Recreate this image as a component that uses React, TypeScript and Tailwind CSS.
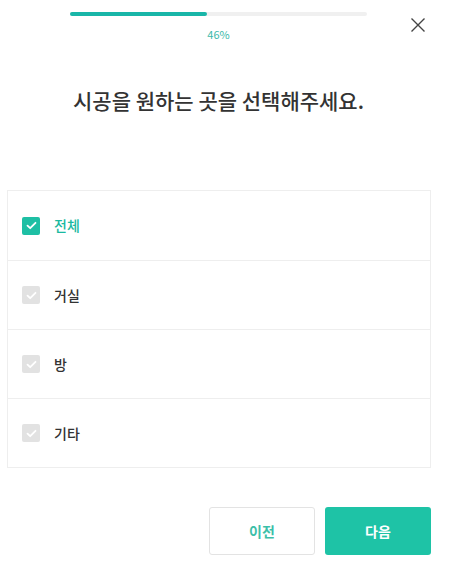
import React from "react";

const items = [
  { label: "전체", checked: true },
  { label: "거실", checked: false },
  { label: "방", checked: false },
  { label: "기타", checked: false },
];

function Check({ on }: { on: boolean }) {
  return (
    <div
      className={`flex h-[18px] w-[18px] items-center justify-center rounded-[2px] ${
        on ? "bg-[#1ebfa4]" : "bg-[#e2e2e2]"
      }`}
    >
      <svg width="11" height="9" viewBox="0 0 11 9" fill="none">
        <path d="M1.5 4.6 4.2 7.2 9.5 1.8" stroke="white" strokeWidth="1.8" strokeLinecap="round" strokeLinejoin="round" />
      </svg>
    </div>
  );
}

export default function App() {
  return (
    <div
      className="relative h-[573px] w-[450px] bg-white"
      style={{ fontFamily: '"Noto Sans CJK KR", "Noto Sans", sans-serif' }}
    >
      <div className="flex w-[437px] flex-col items-center pt-[12px]">
        <div className="h-[4px] w-[297px] rounded-full bg-[#f0f0f0]">
          <div className="h-[4px] w-[137px] rounded-full bg-[#19b6a8]" />
        </div>
        <div className="mt-[11px] text-[11px] leading-[14px] text-[#3bb9a9]">46%</div>
      </div>
      <button className="absolute left-[410px] top-[17px] flex h-[16px] w-[16px] items-center justify-center">
        <svg width="16" height="16" viewBox="0 0 16 16" fill="none">
          <path d="M1.5 1.5 14.5 14.5M14.5 1.5 1.5 14.5" stroke="#444" strokeWidth="1.4" />
        </svg>
      </button>
      <h1 className="mt-[44px] w-[437px] text-center text-[21px] font-medium leading-[30px] text-[#333]">
        시공을 원하는 곳을 선택해주세요.
      </h1>
      <div className="ml-[7px] mt-[75px] w-[424px] border border-[#eeeeee]">
        {items.map((it, i) => (
          <div
            key={it.label}
            className={`flex h-[69px] items-center gap-[14px] pl-[14px] ${
              i > 0 ? "border-t border-[#eeeeee]" : ""
            }`}
          >
            <Check on={it.checked} />
            <span
              className={`text-[14px] font-medium ${it.checked ? "text-[#1ab9a0]" : "text-[#333]"}`}
            >
              {it.label}
            </span>
          </div>
        ))}
      </div>
      <div className="mt-[39px] flex justify-end gap-[10px] pr-[19px]">
        <button className="h-[48px] w-[106px] rounded-[3px] border border-[#e3e3e3] bg-white text-[14px] font-bold text-[#3cbfa9]">
          이전
        </button>
        <button className="h-[48px] w-[106px] rounded-[3px] bg-[#1ec3a6] text-[14px] font-bold text-white">
          다음
        </button>
      </div>
    </div>
  );
}
